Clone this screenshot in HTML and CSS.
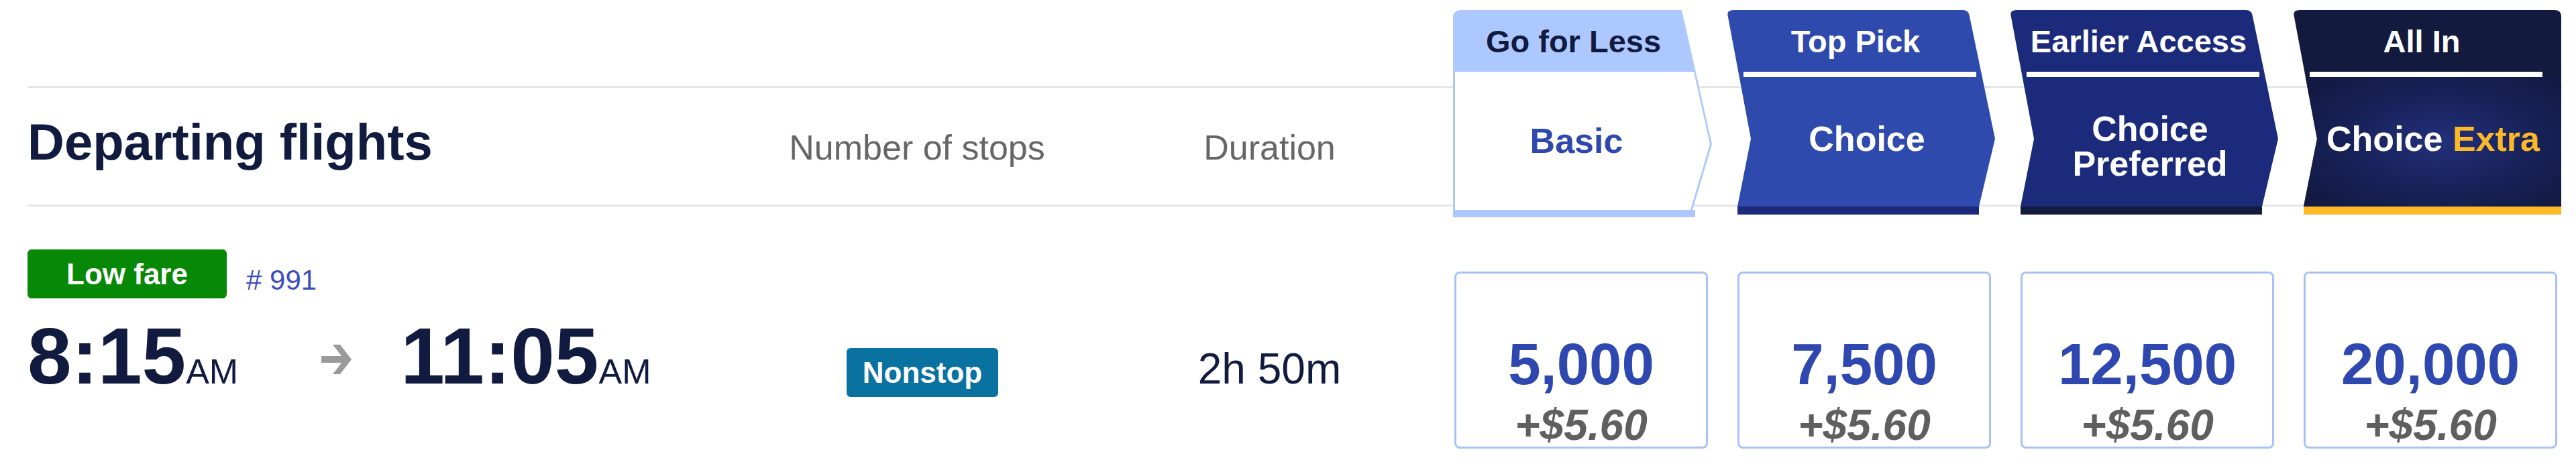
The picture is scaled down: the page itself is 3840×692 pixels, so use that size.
FILE: index.html
```html
<!DOCTYPE html>
<html lang="en">
<head>
    <meta charset="UTF-8">
    <meta name="viewport" content="width=device-width, initial-scale=1.0">
    <title>Departing flights</title>
    <link rel="stylesheet" href="styles.css">
</head>
<body>
    <main class="flights">
        <div class="head">
            <div class="info head-info">
                <h2 class="title">Departing flights</h2>
                <div class="col-label">Number of stops</div>
                <div class="col-label">Duration</div>
            </div>
            <div class="fares">
                <div class="tier tier-basic">
                    <div class="tier-name">Go for Less</div>
                    <div class="tier-body">Basic</div>
                    <div class="tier-foot"></div>
                </div>
                <div class="tier tier-choice">
                    <div class="tier-name">Top Pick</div>
                    <div class="tier-rule"></div>
                    <div class="tier-body">Choice</div>
                    <div class="tier-foot"></div>
                </div>
                <div class="tier tier-preferred">
                    <div class="tier-name">Earlier Access</div>
                    <div class="tier-rule"></div>
                    <div class="tier-body">Choice<br>Preferred</div>
                    <div class="tier-foot"></div>
                </div>
                <div class="tier tier-extra">
                    <div class="tier-name">All In</div>
                    <div class="tier-rule"></div>
                    <div class="tier-body">Choice&nbsp;<span class="gold">Extra</span></div>
                    <div class="tier-foot"></div>
                </div>
            </div>
        </div>

        <div class="flight">
            <div class="info">
                <div class="times-col">
                    <div class="tags">
                        <span class="badge badge-low">Low fare</span>
                        <span class="flight-num"># 991</span>
                    </div>
                    <div class="times">
                        <span class="time">8:15<small>AM</small></span>
                        <svg class="arrow" width="45" height="45" viewBox="0 0 45 45">
                            <rect x="0" y="18" width="36" height="10" fill="#9a9a9a"/>
                            <polygon points="17,1 28,1 45,23 28,45 17,45 34,23" fill="#9a9a9a"/>
                        </svg>
                        <span class="time time-arrive">11:05<small>AM</small></span>
                    </div>
                </div>
                <div class="stops"><span class="badge badge-stop">Nonstop</span></div>
                <div class="duration">2h 50m</div>
            </div>
            <div class="fares fare-row">
                <div class="fare-card"><div class="points">5,000</div><div class="fee">+$5.60</div></div>
                <div class="fare-card"><div class="points">7,500</div><div class="fee">+$5.60</div></div>
                <div class="fare-card"><div class="points">12,500</div><div class="fee">+$5.60</div></div>
                <div class="fare-card"><div class="points">20,000</div><div class="fee">+$5.60</div></div>
            </div>
        </div>
    </main>
</body>
</html>
```

FILE: styles.css
```css
body {
    margin: 0;
    background: #fff;
    font-family: "Liberation Sans", Arial, sans-serif;
    color: #111a3f;
}
.flights {
    width: 3778px;
    padding: 15px 0 0 41px;
}
.head {
    display: flex;
    height: 309px;
    background-image: linear-gradient(#e6e6e6, #e6e6e6), linear-gradient(#e6e6e6, #e6e6e6);
    background-size: 100% 3px;
    background-position: 0 113px, 0 290px;
    background-repeat: no-repeat;
}
.info {
    display: grid;
    grid-template-columns: 1076px 500px 551px;
    flex: none;
    align-items: start;
}
.head-info {
    align-items: baseline;
    align-self: flex-start;
    padding-top: 159px;
}
.title {
    margin: 0;
    font-size: 76px;
    line-height: 1;
    font-weight: 700;
    color: #111a3f;
}
.col-label {
    font-size: 52px;
    line-height: 1;
    color: #666;
    text-align: center;
}
.fares {
    display: grid;
    grid-template-columns: repeat(4, 378px);
    column-gap: 44px;
    flex: none;
}

/* fare tier tabs */
.tier {
    display: flex;
    flex-direction: column;
    width: 400px;
    height: 305px;
    margin-left: -16px;
    font-weight: 700;
    color: #fff;
    clip-path: path('M 10 0 H 352 Q 360 0 361.7 8 L 400 192 L 376 293 V 305 H 16 V 293 L 36 192 L 1.5 8 Q 0 0 10 0 Z');
}
.tier-name {
    height: 92px;
    display: flex;
    align-items: center;
    justify-content: center;
    padding-right: 16px;
    font-size: 47px;
    flex: none;
}
.tier-rule {
    height: 8px;
    background: #fff;
    margin: 0 28px 0 25px;
    flex: none;
}
.tier-body {
    flex: 1;
    display: flex;
    align-items: center;
    justify-content: center;
    text-align: center;
    padding: 0 0 10px 18px;
    font-size: 52px;
    line-height: 1;
}
.tier-foot {
    height: 12px;
    flex: none;
}
.tier-basic {
    width: 386px;
    height: 309px;
    margin-left: -2px;
    background: #adc8ff;
    color: #111a3f;
    clip-path: path('M 12 0 H 341 L 386 200 L 357 298 H 361 V 309 H 0 V 12 Q 0 0 12 0 Z');
}
.tier-basic .tier-name {
    padding-right: 27px;
}
.tier-basic .tier-body {
    background: #fff;
    color: #2e48b0;
    padding: 0 18px 0 0;
    clip-path: polygon(3px 0, 359px 0, 383px 108px, 354px 206px, 3px 206px);
}
.tier-basic .tier-foot {
    height: 11px;
}
.tier-choice {
    background: #2f4aad;
}
.tier-choice .tier-foot {
    background: #1b2a7b;
}
.tier-preferred {
    background: #1b2a7b;
}
.tier-preferred .tier-body {
    padding: 12px 0 0 18px;
}
.tier-preferred .tier-foot {
    background: #121a3d;
}
.tier-extra {
    background: #121a3e;
    clip-path: path('M 10 0 H 390 Q 400 0 400 10 V 305 H 16 V 293 L 36 192 L 1.5 8 Q 0 0 10 0 Z');
}
.tier-extra .tier-body {
    background: radial-gradient(ellipse 60% 65% at 55% 50%, #22307a 0%, #18225a 55%, #121a44 100%);
}
.tier-extra .tier-foot {
    background: #fdb826;
}
.gold {
    color: #fbb829;
}

/* flight row */
.flight {
    display: flex;
    margin-top: 48px;
}
.tags {
    display: flex;
    align-items: flex-end;
}
.badge {
    display: inline-block;
    height: 73px;
    line-height: 73px;
    border-radius: 6px;
    color: #fff;
    font-size: 44px;
    font-weight: 700;
    text-align: center;
}
.badge-low {
    width: 297px;
    background: #078807;
}
.flight-num {
    margin: 0 0 3px 29px;
    font-size: 42px;
    color: #3a4fbf;
}
.times {
    display: flex;
    align-items: center;
    margin-top: 27px;
}
.time {
    font-size: 118px;
    line-height: 1;
    font-weight: 700;
    color: #111a3f;
}
.time small {
    font-size: 52px;
    font-weight: 400;
}
.arrow {
    margin: 9px 0 0 124px;
    flex: none;
}
.time-arrive {
    margin-left: 73px;
}
.stops {
    text-align: center;
    padding: 147px 0 0 16px;
}
.badge-stop {
    padding: 0 24px;
    background: #0a72a1;
}
.duration {
    padding-top: 146px;
    text-align: center;
    font-size: 64px;
    line-height: 1;
}
.fare-row {
    padding-top: 33px;
}
.fare-card {
    box-sizing: border-box;
    height: 264px;
    border: 3px solid #a8c2f3;
    border-radius: 8px;
    display: flex;
    flex-direction: column;
    align-items: center;
    justify-content: flex-end;
}
.points {
    font-size: 87px;
    line-height: 1;
    font-weight: 700;
    color: #2e48b0;
}
.fee {
    margin-top: 16px;
    font-size: 64px;
    line-height: 1;
    font-weight: 700;
    font-style: italic;
    color: #5f5f5f;
}
```
